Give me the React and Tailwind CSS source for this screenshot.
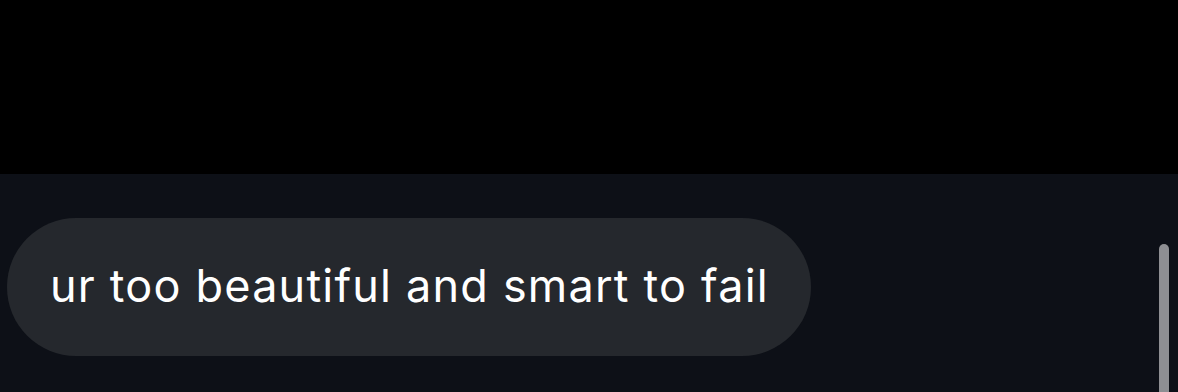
import React from "react";

const App = () => {
    return (
        <div className="w-[1178px] h-[392px] bg-black flex flex-col overflow-hidden" style={{ fontFamily: "Inter, Roboto, sans-serif" }}>
            {/* top empty area */}
            <div className="h-[174px] shrink-0 bg-black" />

            {/* chat panel */}
            <div className="flex-1 bg-[#0d1017] flex pt-[44px] pl-[7px] pr-[9px]">
                <div className="flex-1">
                    <div className="inline-flex items-center h-[138px] rounded-full bg-[#25282d] pl-[43px] pr-[42px] pb-[4px]">
                        <span className="text-[45px] text-white leading-none tracking-[1.2px]">
                            ur too beautiful and smart to fail
                        </span>
                    </div>
                </div>

                {/* scrollbar */}
                <div className="w-[10px] mt-[26px] rounded-t-full bg-[#8e8f93]" />
            </div>
        </div>
    );
};

export default App;
